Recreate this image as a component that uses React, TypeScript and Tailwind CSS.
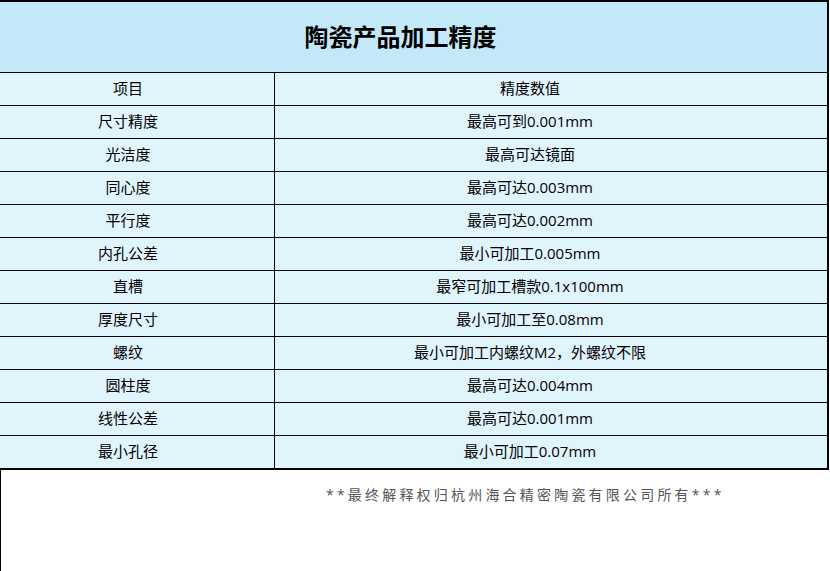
const rows: [string, string][] = [
  ["尺寸精度", "最高可到0.001mm"],
  ["光洁度", "最高可达镜面"],
  ["同心度", "最高可达0.003mm"],
  ["平行度", "最高可达0.002mm"],
  ["内孔公差", "最小可加工0.005mm"],
  ["直槽", "最窄可加工槽款0.1x100mm"],
  ["厚度尺寸", "最小可加工至0.08mm"],
  ["螺纹", "最小可加工内螺纹M2，外螺纹不限"],
  ["圆柱度", "最高可达0.004mm"],
  ["线性公差", "最高可达0.001mm"],
  ["最小孔径", "最小可加工0.07mm"],
]

export default function App() {
  return (
    <div
      className="h-[571px] w-[830px] overflow-hidden bg-white text-black"
      style={{ fontFamily: '"Open Sans", "Noto Sans CJK SC", sans-serif' }}
    >
      <div className="w-[829px] border-t-2 border-r-2 border-black">
        <div className="flex h-[71px] items-center justify-center border-b border-black bg-[#c3e8f8] pr-[26px]">
          <h1 className="text-[24px] font-bold leading-none">陶瓷产品加工精度</h1>
        </div>
        <div className="grid grid-cols-[275px_1fr] border-b border-black bg-[#e0f4fc] text-[15px]">
          <div className="flex h-[32px] items-center justify-center border-r border-black pr-[18px] pb-[2px]">项目</div>
          <div className="flex h-[32px] items-center justify-center pr-[42px] pb-[2px]">精度数值</div>
        </div>
        {rows.map(([name, value], i) => (
          <div
            key={name}
            className={
              i === rows.length - 1
                ? "grid grid-cols-[275px_1fr] border-b-2 border-black bg-[#e0f4fc] text-[15px]"
                : "grid grid-cols-[275px_1fr] border-b border-black bg-[#e0f4fc] text-[15px]"
            }
          >
            <div className="flex h-[32px] items-center justify-center border-r border-black pr-[18px] pb-[2px]">{name}</div>
            <div className="flex h-[32px] items-center justify-center pr-[42px] pb-[2px]">{value}</div>
          </div>
        ))}
      </div>
      <div className="h-[101px] border-l border-black pl-[325px] pt-[15px]">
        <p className="text-[14px] leading-[20px] tracking-[3.2px] text-[#555]">
          **最终解释权归杭州海合精密陶瓷有限公司所有***
        </p>
      </div>
    </div>
  )
}
